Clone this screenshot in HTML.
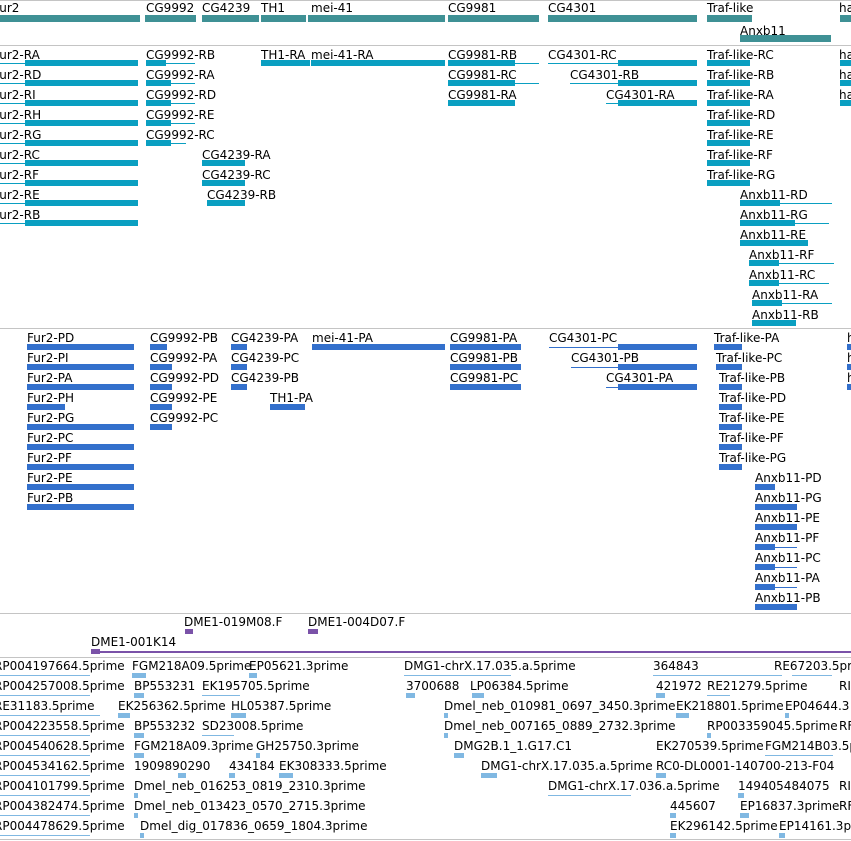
<!DOCTYPE html>
<html><head><meta charset="utf-8">
<style>
html,body{margin:0;padding:0;background:#fff;}
body{width:851px;height:841px;position:relative;overflow:hidden;font:12px/14px "DejaVu Sans","Liberation Sans",sans-serif;}
.l{position:absolute;white-space:nowrap;color:#000;}
.b{position:absolute;height:6px;background:#0a9fc1;}
.g{position:absolute;height:7px;background:#3f9195;}
.p{position:absolute;height:6px;background:#3370cc;}
.n{position:absolute;height:1px;}
.e{position:absolute;height:5px;background:#80b8e2;}
.s{position:absolute;left:0;width:851px;height:1px;background:#c4c4c4;}
</style></head><body>
<div class="s" style="top:0"></div>
<div class="s" style="top:45px"></div>
<div class="s" style="top:328px"></div>
<div class="s" style="top:613px"></div>
<div class="s" style="top:657px"></div>
<div class="s" style="top:839px"></div>

<!-- gene track -->
<div class="l" style="left:-7px;top:1px">Fur2</div><div class="g" style="left:0;top:15px;width:140px"></div>
<div class="l" style="left:146px;top:1px">CG9992</div><div class="g" style="left:145px;top:15px;width:51px"></div>
<div class="l" style="left:202px;top:1px">CG4239</div><div class="g" style="left:202px;top:15px;width:57px"></div>
<div class="l" style="left:261px;top:1px">TH1</div><div class="g" style="left:261px;top:15px;width:45px"></div>
<div class="l" style="left:311px;top:1px">mei-41</div><div class="g" style="left:308px;top:15px;width:137px"></div>
<div class="l" style="left:448px;top:1px">CG9981</div><div class="g" style="left:448px;top:15px;width:91px"></div>
<div class="l" style="left:548px;top:1px">CG4301</div><div class="g" style="left:548px;top:15px;width:149px"></div>
<div class="l" style="left:707px;top:1px">Traf-like</div><div class="g" style="left:707px;top:15px;width:45px"></div>
<div class="l" style="left:740px;top:24px">Anxb11</div><div class="g" style="left:740px;top:35px;width:91px"></div>
<div class="l" style="left:839px;top:1px">ha</div><div class="g" style="left:840px;top:15px;width:11px"></div>

<!-- top transcripts -->
<div class="l" style="left:-7px;top:48px">Fur2-RA</div><div class="b" style="left:25px;top:60px;width:113px"></div><div class="n" style="left:0;top:63px;width:25px;background:#0a9fc1"></div>
<div class="l" style="left:-7px;top:68px">Fur2-RD</div><div class="b" style="left:25px;top:80px;width:113px"></div><div class="n" style="left:0;top:83px;width:25px;background:#0a9fc1"></div>
<div class="l" style="left:-7px;top:88px">Fur2-RI</div><div class="b" style="left:25px;top:100px;width:113px"></div><div class="n" style="left:0;top:103px;width:25px;background:#0a9fc1"></div>
<div class="l" style="left:-7px;top:108px">Fur2-RH</div><div class="b" style="left:25px;top:120px;width:113px"></div><div class="n" style="left:0;top:123px;width:25px;background:#0a9fc1"></div>
<div class="l" style="left:-7px;top:128px">Fur2-RG</div><div class="b" style="left:25px;top:140px;width:113px"></div><div class="n" style="left:0;top:143px;width:25px;background:#0a9fc1"></div>
<div class="l" style="left:-7px;top:148px">Fur2-RC</div><div class="b" style="left:25px;top:160px;width:113px"></div><div class="n" style="left:0;top:163px;width:25px;background:#0a9fc1"></div>
<div class="l" style="left:-7px;top:168px">Fur2-RF</div><div class="b" style="left:25px;top:180px;width:113px"></div><div class="n" style="left:0;top:183px;width:25px;background:#0a9fc1"></div>
<div class="l" style="left:-7px;top:188px">Fur2-RE</div><div class="b" style="left:25px;top:200px;width:113px"></div><div class="n" style="left:0;top:203px;width:25px;background:#0a9fc1"></div>
<div class="l" style="left:-7px;top:208px">Fur2-RB</div><div class="b" style="left:25px;top:220px;width:113px"></div><div class="n" style="left:0;top:223px;width:25px;background:#0a9fc1"></div>

<div class="l" style="left:146px;top:48px">CG9992-RB</div><div class="b" style="left:146px;top:60px;width:20px"></div><div class="n" style="left:146px;top:63px;width:49px;background:#0a9fc1"></div>
<div class="l" style="left:146px;top:68px">CG9992-RA</div><div class="b" style="left:146px;top:80px;width:25px"></div><div class="n" style="left:146px;top:83px;width:49px;background:#0a9fc1"></div>
<div class="l" style="left:146px;top:88px">CG9992-RD</div><div class="b" style="left:146px;top:100px;width:25px"></div><div class="n" style="left:146px;top:103px;width:49px;background:#0a9fc1"></div>
<div class="l" style="left:146px;top:108px">CG9992-RE</div><div class="b" style="left:146px;top:120px;width:25px"></div><div class="n" style="left:146px;top:123px;width:49px;background:#0a9fc1"></div>
<div class="l" style="left:146px;top:128px">CG9992-RC</div><div class="b" style="left:146px;top:140px;width:25px"></div><div class="n" style="left:146px;top:143px;width:40px;background:#0a9fc1"></div>

<div class="l" style="left:261px;top:48px">TH1-RA</div><div class="b" style="left:261px;top:60px;width:49px"></div>
<div class="l" style="left:311px;top:48px">mei-41-RA</div><div class="b" style="left:311px;top:60px;width:134px"></div>
<div class="l" style="left:202px;top:148px">CG4239-RA</div><div class="b" style="left:202px;top:160px;width:43px"></div>
<div class="l" style="left:202px;top:168px">CG4239-RC</div><div class="b" style="left:202px;top:180px;width:43px"></div>
<div class="l" style="left:207px;top:188px">CG4239-RB</div><div class="b" style="left:207px;top:200px;width:38px"></div>

<div class="l" style="left:448px;top:48px">CG9981-RB</div><div class="b" style="left:448px;top:60px;width:67px"></div><div class="n" style="left:448px;top:63px;width:91px;background:#0a9fc1"></div>
<div class="l" style="left:448px;top:68px">CG9981-RC</div><div class="b" style="left:448px;top:80px;width:67px"></div><div class="n" style="left:448px;top:83px;width:91px;background:#0a9fc1"></div>
<div class="l" style="left:448px;top:88px">CG9981-RA</div><div class="b" style="left:448px;top:100px;width:67px"></div>

<div class="l" style="left:548px;top:48px">CG4301-RC</div><div class="b" style="left:618px;top:60px;width:79px"></div><div class="n" style="left:548px;top:63px;width:70px;background:#0a9fc1"></div>
<div class="l" style="left:570px;top:68px">CG4301-RB</div><div class="b" style="left:618px;top:80px;width:79px"></div><div class="n" style="left:570px;top:83px;width:48px;background:#0a9fc1"></div>
<div class="l" style="left:606px;top:88px">CG4301-RA</div><div class="b" style="left:618px;top:100px;width:79px"></div><div class="n" style="left:606px;top:103px;width:12px;background:#0a9fc1"></div>

<div class="l" style="left:707px;top:48px">Traf-like-RC</div><div class="b" style="left:707px;top:60px;width:43px"></div>
<div class="l" style="left:707px;top:68px">Traf-like-RB</div><div class="b" style="left:707px;top:80px;width:43px"></div>
<div class="l" style="left:707px;top:88px">Traf-like-RA</div><div class="b" style="left:707px;top:100px;width:43px"></div>
<div class="l" style="left:707px;top:108px">Traf-like-RD</div><div class="b" style="left:707px;top:120px;width:43px"></div>
<div class="l" style="left:707px;top:128px">Traf-like-RE</div><div class="b" style="left:707px;top:140px;width:43px"></div>
<div class="l" style="left:707px;top:148px">Traf-like-RF</div><div class="b" style="left:707px;top:160px;width:43px"></div>
<div class="l" style="left:707px;top:168px">Traf-like-RG</div><div class="b" style="left:707px;top:180px;width:43px"></div>

<div class="l" style="left:740px;top:188px">Anxb11-RD</div><div class="b" style="left:740px;top:200px;width:40px"></div><div class="n" style="left:740px;top:203px;width:92px;background:#0a9fc1"></div>
<div class="l" style="left:740px;top:208px">Anxb11-RG</div><div class="b" style="left:740px;top:220px;width:55px"></div><div class="n" style="left:740px;top:223px;width:89px;background:#0a9fc1"></div>
<div class="l" style="left:740px;top:228px">Anxb11-RE</div><div class="b" style="left:740px;top:240px;width:68px"></div>
<div class="l" style="left:749px;top:248px">Anxb11-RF</div><div class="b" style="left:749px;top:260px;width:30px"></div><div class="n" style="left:749px;top:263px;width:85px;background:#0a9fc1"></div>
<div class="l" style="left:749px;top:268px">Anxb11-RC</div><div class="b" style="left:749px;top:280px;width:30px"></div><div class="n" style="left:749px;top:283px;width:80px;background:#0a9fc1"></div>
<div class="l" style="left:752px;top:288px">Anxb11-RA</div><div class="b" style="left:752px;top:300px;width:30px"></div><div class="n" style="left:752px;top:303px;width:80px;background:#0a9fc1"></div>
<div class="l" style="left:752px;top:308px">Anxb11-RB</div><div class="b" style="left:752px;top:320px;width:44px"></div>

<div class="l" style="left:839px;top:48px">ha</div><div class="b" style="left:840px;top:60px;width:11px"></div>
<div class="l" style="left:839px;top:68px">ha</div><div class="b" style="left:840px;top:80px;width:11px"></div>
<div class="l" style="left:839px;top:88px">ha</div><div class="b" style="left:840px;top:100px;width:11px"></div>

<!-- panel 2 -->
<div class="l" style="left:27px;top:331px">Fur2-PD</div><div class="p" style="left:27px;top:344px;width:107px"></div>
<div class="l" style="left:27px;top:351px">Fur2-PI</div><div class="p" style="left:27px;top:364px;width:107px"></div>
<div class="l" style="left:27px;top:371px">Fur2-PA</div><div class="p" style="left:27px;top:384px;width:107px"></div>
<div class="l" style="left:27px;top:391px">Fur2-PH</div><div class="p" style="left:27px;top:404px;width:38px"></div>
<div class="l" style="left:27px;top:411px">Fur2-PG</div><div class="p" style="left:27px;top:424px;width:107px"></div>
<div class="l" style="left:27px;top:431px">Fur2-PC</div><div class="p" style="left:27px;top:444px;width:107px"></div>
<div class="l" style="left:27px;top:451px">Fur2-PF</div><div class="p" style="left:27px;top:464px;width:107px"></div>
<div class="l" style="left:27px;top:471px">Fur2-PE</div><div class="p" style="left:27px;top:484px;width:107px"></div>
<div class="l" style="left:27px;top:491px">Fur2-PB</div><div class="p" style="left:27px;top:504px;width:107px"></div>

<div class="l" style="left:150px;top:331px">CG9992-PB</div><div class="p" style="left:150px;top:344px;width:17px"></div>
<div class="l" style="left:150px;top:351px">CG9992-PA</div><div class="p" style="left:150px;top:364px;width:22px"></div>
<div class="l" style="left:150px;top:371px">CG9992-PD</div><div class="p" style="left:150px;top:384px;width:22px"></div>
<div class="l" style="left:150px;top:391px">CG9992-PE</div><div class="p" style="left:150px;top:404px;width:22px"></div>
<div class="l" style="left:150px;top:411px">CG9992-PC</div><div class="p" style="left:150px;top:424px;width:22px"></div>

<div class="l" style="left:231px;top:331px">CG4239-PA</div><div class="p" style="left:231px;top:344px;width:16px"></div>
<div class="l" style="left:231px;top:351px">CG4239-PC</div><div class="p" style="left:231px;top:364px;width:16px"></div>
<div class="l" style="left:231px;top:371px">CG4239-PB</div><div class="p" style="left:231px;top:384px;width:16px"></div>
<div class="l" style="left:270px;top:391px">TH1-PA</div><div class="p" style="left:270px;top:404px;width:35px"></div>
<div class="l" style="left:312px;top:331px">mei-41-PA</div><div class="p" style="left:312px;top:344px;width:133px"></div>

<div class="l" style="left:450px;top:331px">CG9981-PA</div><div class="p" style="left:450px;top:344px;width:71px"></div>
<div class="l" style="left:450px;top:351px">CG9981-PB</div><div class="p" style="left:450px;top:364px;width:71px"></div>
<div class="l" style="left:450px;top:371px">CG9981-PC</div><div class="p" style="left:450px;top:384px;width:71px"></div>

<div class="l" style="left:549px;top:331px">CG4301-PC</div><div class="p" style="left:618px;top:344px;width:79px"></div><div class="n" style="left:549px;top:347px;width:69px;background:#3370cc"></div>
<div class="l" style="left:571px;top:351px">CG4301-PB</div><div class="p" style="left:618px;top:364px;width:79px"></div><div class="n" style="left:571px;top:367px;width:47px;background:#3370cc"></div>
<div class="l" style="left:606px;top:371px">CG4301-PA</div><div class="p" style="left:618px;top:384px;width:79px"></div><div class="n" style="left:606px;top:387px;width:12px;background:#3370cc"></div>

<div class="l" style="left:714px;top:331px">Traf-like-PA</div><div class="p" style="left:714px;top:344px;width:28px"></div>
<div class="l" style="left:716px;top:351px">Traf-like-PC</div><div class="p" style="left:716px;top:364px;width:26px"></div>
<div class="l" style="left:719px;top:371px">Traf-like-PB</div><div class="p" style="left:719px;top:384px;width:23px"></div>
<div class="l" style="left:719px;top:391px">Traf-like-PD</div><div class="p" style="left:719px;top:404px;width:23px"></div>
<div class="l" style="left:719px;top:411px">Traf-like-PE</div><div class="p" style="left:719px;top:424px;width:23px"></div>
<div class="l" style="left:719px;top:431px">Traf-like-PF</div><div class="p" style="left:719px;top:444px;width:23px"></div>
<div class="l" style="left:719px;top:451px">Traf-like-PG</div><div class="p" style="left:719px;top:464px;width:23px"></div>

<div class="l" style="left:755px;top:471px">Anxb11-PD</div><div class="p" style="left:755px;top:484px;width:20px"></div>
<div class="l" style="left:755px;top:491px">Anxb11-PG</div><div class="p" style="left:755px;top:504px;width:42px"></div>
<div class="l" style="left:755px;top:511px">Anxb11-PE</div><div class="p" style="left:755px;top:524px;width:42px"></div>
<div class="l" style="left:755px;top:531px">Anxb11-PF</div><div class="p" style="left:755px;top:544px;width:20px"></div><div class="n" style="left:755px;top:547px;width:42px;background:#3370cc"></div>
<div class="l" style="left:755px;top:551px">Anxb11-PC</div><div class="p" style="left:755px;top:564px;width:20px"></div><div class="n" style="left:755px;top:567px;width:42px;background:#3370cc"></div>
<div class="l" style="left:755px;top:571px">Anxb11-PA</div><div class="p" style="left:755px;top:584px;width:20px"></div><div class="n" style="left:755px;top:587px;width:42px;background:#3370cc"></div>
<div class="l" style="left:755px;top:591px">Anxb11-PB</div><div class="p" style="left:755px;top:604px;width:42px"></div>

<div class="l" style="left:847px;top:331px">h</div><div class="p" style="left:847px;top:344px;width:4px"></div>
<div class="l" style="left:847px;top:351px">h</div><div class="p" style="left:847px;top:364px;width:4px"></div>
<div class="l" style="left:847px;top:371px">h</div><div class="p" style="left:847px;top:384px;width:4px"></div>

<!-- panel 3 -->
<div class="l" style="left:184px;top:615px">DME1-019M08.F</div><div style="position:absolute;left:185px;top:629px;width:8px;height:5px;background:#7a52a8"></div>
<div class="l" style="left:308px;top:615px">DME1-004D07.F</div><div style="position:absolute;left:308px;top:629px;width:10px;height:5px;background:#7a52a8"></div>
<div class="l" style="left:91px;top:635px">DME1-001K14</div><div style="position:absolute;left:91px;top:649px;width:9px;height:5px;background:#7a52a8"></div><div class="n" style="left:91px;top:651px;width:760px;background:#7a52a8;height:2px"></div>

<!-- ESTs -->
<div class="l" style="left:-6px;top:659px">RP004197664.5prime</div><div class="n" style="left:0;top:675px;width:90px;background:#80b8e2"></div>
<div class="l" style="left:132px;top:659px">FGM218A09.5prime</div><div class="e" style="left:132px;top:673px;width:14px"></div>
<div class="l" style="left:249px;top:659px">EP05621.3prime</div><div class="e" style="left:249px;top:673px;width:8px"></div>
<div class="l" style="left:404px;top:659px">DMG1-chrX.17.035.a.5prime</div><div class="n" style="left:404px;top:675px;width:107px;background:#80b8e2"></div>
<div class="l" style="left:653px;top:659px">364843</div><div class="n" style="left:653px;top:675px;width:129px;background:#80b8e2"></div>
<div class="l" style="left:774px;top:659px">RE67203.5prime</div><div class="n" style="left:792px;top:675px;width:40px;background:#80b8e2"></div>

<div class="l" style="left:-6px;top:679px">RP004257008.5prime</div><div class="n" style="left:0;top:695px;width:90px;background:#80b8e2"></div>
<div class="l" style="left:134px;top:679px">BP553231</div><div class="e" style="left:134px;top:693px;width:10px"></div>
<div class="l" style="left:202px;top:679px">EK195705.5prime</div><div class="n" style="left:202px;top:695px;width:38px;background:#80b8e2"></div>
<div class="l" style="left:406px;top:679px">3700688</div><div class="e" style="left:406px;top:693px;width:9px"></div>
<div class="l" style="left:470px;top:679px">LP06384.5prime</div><div class="e" style="left:472px;top:693px;width:12px"></div>
<div class="l" style="left:656px;top:679px">421972</div><div class="e" style="left:656px;top:693px;width:9px"></div>
<div class="l" style="left:707px;top:679px">RE21279.5prime</div><div class="n" style="left:707px;top:695px;width:23px;background:#80b8e2"></div>
<div class="l" style="left:839px;top:679px">RI</div>

<div class="l" style="left:-6px;top:699px">RE31183.5prime</div><div class="n" style="left:0;top:715px;width:100px;background:#80b8e2"></div>
<div class="l" style="left:118px;top:699px">EK256362.5prime</div><div class="e" style="left:118px;top:713px;width:12px"></div>
<div class="l" style="left:231px;top:699px">HL05387.5prime</div><div class="e" style="left:231px;top:713px;width:15px"></div>
<div class="l" style="left:444px;top:699px">Dmel_neb_010981_0697_3450.3prime</div><div class="e" style="left:444px;top:713px;width:4px"></div>
<div class="l" style="left:676px;top:699px">EK218801.5prime</div><div class="e" style="left:676px;top:713px;width:13px"></div>
<div class="l" style="left:785px;top:699px">EP04644.3</div><div class="e" style="left:785px;top:713px;width:4px"></div>

<div class="l" style="left:-6px;top:719px">RP004223558.5prime</div><div class="n" style="left:0;top:735px;width:90px;background:#80b8e2"></div>
<div class="l" style="left:134px;top:719px">BP553232</div><div class="e" style="left:134px;top:733px;width:10px"></div>
<div class="l" style="left:202px;top:719px">SD23008.5prime</div><div class="n" style="left:202px;top:735px;width:32px;background:#80b8e2"></div>
<div class="l" style="left:444px;top:719px">Dmel_neb_007165_0889_2732.3prime</div><div class="e" style="left:444px;top:733px;width:4px"></div>
<div class="l" style="left:707px;top:719px">RP003359045.5prime</div><div class="e" style="left:707px;top:733px;width:4px"></div>
<div class="l" style="left:839px;top:719px">RF</div>

<div class="l" style="left:-6px;top:739px">RP004540628.5prime</div><div class="n" style="left:0;top:755px;width:90px;background:#80b8e2"></div>
<div class="l" style="left:134px;top:739px">FGM218A09.3prime</div><div class="e" style="left:134px;top:753px;width:10px"></div>
<div class="l" style="left:256px;top:739px">GH25750.3prime</div><div class="e" style="left:256px;top:753px;width:4px"></div>
<div class="l" style="left:454px;top:739px">DMG2B.1_1.G17.C1</div><div class="e" style="left:454px;top:753px;width:10px"></div>
<div class="l" style="left:656px;top:739px">EK270539.5prime</div><div class="n" style="left:765px;top:755px;width:68px;background:#80b8e2"></div>
<div class="l" style="left:765px;top:739px">FGM214B03.5p</div>

<div class="l" style="left:-6px;top:759px">RP004534162.5prime</div><div class="n" style="left:0;top:775px;width:90px;background:#80b8e2"></div>
<div class="l" style="left:134px;top:759px">1909890290</div><div class="e" style="left:178px;top:773px;width:8px"></div>
<div class="l" style="left:229px;top:759px">434184</div><div class="e" style="left:229px;top:773px;width:6px"></div>
<div class="l" style="left:279px;top:759px">EK308333.5prime</div><div class="e" style="left:279px;top:773px;width:14px"></div>
<div class="l" style="left:481px;top:759px">DMG1-chrX.17.035.a.5prime</div><div class="e" style="left:481px;top:773px;width:16px"></div>
<div class="l" style="left:656px;top:759px">RC0-DL0001-140700-213-F04</div><div class="e" style="left:656px;top:773px;width:10px"></div>

<div class="l" style="left:-6px;top:779px">RP004101799.5prime</div><div class="n" style="left:0;top:795px;width:90px;background:#80b8e2"></div>
<div class="l" style="left:134px;top:779px">Dmel_neb_016253_0819_2310.3prime</div><div class="e" style="left:134px;top:793px;width:4px"></div>
<div class="l" style="left:548px;top:779px">DMG1-chrX.17.036.a.5prime</div><div class="n" style="left:548px;top:795px;width:83px;background:#80b8e2"></div>
<div class="l" style="left:738px;top:779px">149405484075</div><div class="e" style="left:738px;top:793px;width:6px"></div>
<div class="l" style="left:839px;top:779px">RI</div>

<div class="l" style="left:-6px;top:799px">RP004382474.5prime</div><div class="n" style="left:0;top:815px;width:90px;background:#80b8e2"></div>
<div class="l" style="left:134px;top:799px">Dmel_neb_013423_0570_2715.3prime</div><div class="e" style="left:134px;top:813px;width:4px"></div>
<div class="l" style="left:670px;top:799px">445607</div><div class="e" style="left:670px;top:813px;width:6px"></div>
<div class="l" style="left:740px;top:799px">EP16837.3prime</div><div class="e" style="left:740px;top:813px;width:9px"></div>
<div class="l" style="left:839px;top:799px">RF</div>

<div class="l" style="left:-6px;top:819px">RP004478629.5prime</div><div class="n" style="left:0;top:835px;width:90px;background:#80b8e2"></div>
<div class="l" style="left:140px;top:819px">Dmel_dig_017836_0659_1804.3prime</div><div class="e" style="left:140px;top:833px;width:4px"></div>
<div class="l" style="left:670px;top:819px">EK296142.5prime</div><div class="e" style="left:670px;top:833px;width:6px"></div>
<div class="l" style="left:779px;top:819px">EP14161.3p</div><div class="e" style="left:779px;top:833px;width:6px"></div>
</body></html>
